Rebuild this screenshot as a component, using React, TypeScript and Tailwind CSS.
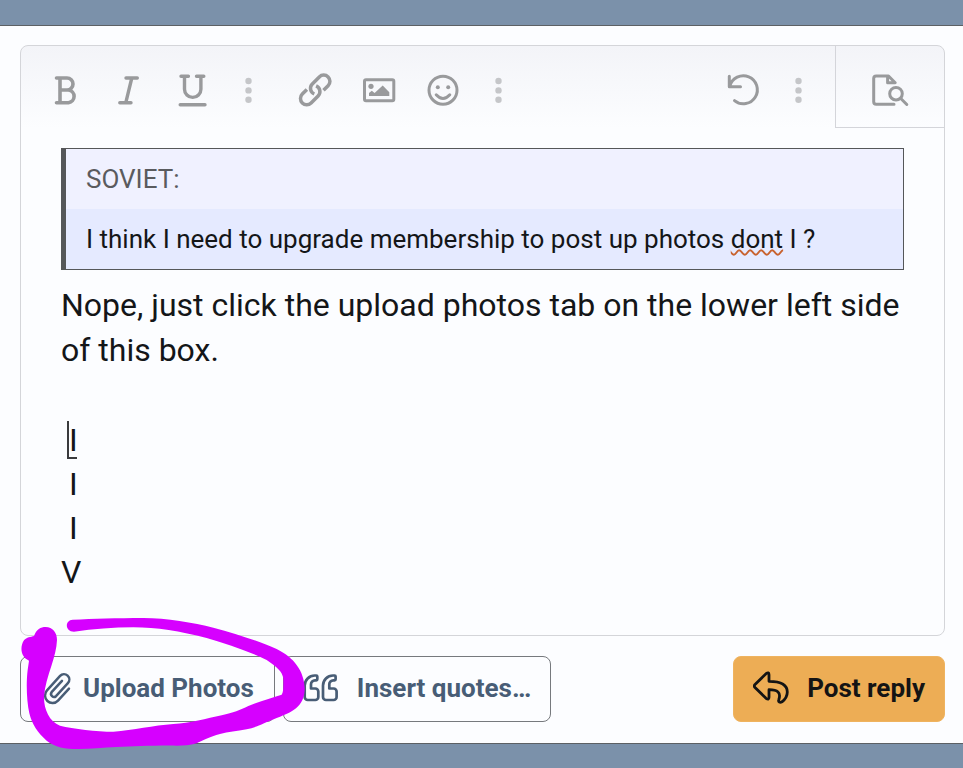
import React from 'react';

interface ToolButtonProps {
  label: string;
  children: React.ReactNode;
}

const ToolButton: React.FC<ToolButtonProps> = ({ label, children }) => (
  <button type="button" aria-label={label} title={label} className="flex h-20 w-16 shrink-0 items-center justify-center text-[#999a9c]">
    <svg
      viewBox="0 0 40 40"
      className="h-10 w-10"
      fill="none"
      stroke="currentColor"
      strokeWidth="3"
      strokeLinecap="round"
      strokeLinejoin="round"
    >
      {children}
    </svg>
  </button>
);

const MoreButton: React.FC<{ label: string }> = ({ label }) => (
  <button type="button" aria-label={label} title={label} className="flex h-20 w-12 shrink-0 items-center justify-center text-[#c5c6c9]">
    <svg viewBox="0 0 8 40" className="h-10 w-2" fill="currentColor">
      <circle cx="3.5" cy="11" r="3.2" />
      <circle cx="3.5" cy="20.4" r="3.2" />
      <circle cx="3.5" cy="29.8" r="3.2" />
    </svg>
  </button>
);

const Toolbar = () => (
  <div className="flex items-start">
    <div className="flex flex-1 items-center pl-3 pt-1">
      <ToolButton label="Bold">
        <path strokeWidth="3.6" d="M11.5 8H22a6 6 0 0 1 0 12h-7M22 20h1.5a6.4 6.4 0 0 1 0 12.700h-12M15 8v24.700" />
      </ToolButton>
      <ToolButton label="Italic">
        <path strokeWidth="3.4" d="M17 8h11.300M10.800 32.700H22M22.800 8l-6 24.700" />
      </ToolButton>
      <ToolButton label="Underline">
        <path strokeWidth="3.4" d="M8 6.200h7.400M23.500 6.200h7.300M11.500 6.200v13a8.200 8.200 0 0 0 16.400 0v-13M7.200 34.700H32" />
      </ToolButton>
      <MoreButton label="More text options" />
      <div className="flex items-center pl-2.5">
        <ToolButton label="Insert link">
          <path strokeLinecap="butt" strokeWidth="3.5" d="M19.3 24A6.2 6.2 0 0 1 17.3 13.9L24.3 6.9A6.2 6.2 0 0 1 33.1 15.7L28.5 20.3" />
          <path strokeLinecap="butt" strokeWidth="3.5" d="M21.1 15.8A6.2 6.2 0 0 1 23.1 25.9L16.1 32.9A6.2 6.2 0 0 1 7.3 24.1L11.9 19.5" />
        </ToolButton>
        <ToolButton label="Insert image">
          <rect x="5.5" y="9.8" width="29.3" height="21" rx="1.5" />
          <circle cx="12" cy="16.3" r="2.6" fill="currentColor" stroke="none" />
          <path stroke="none" fill="currentColor" d="M10 26v-3l2.8-2.3 2.8 2.2 8.1-7.3 6.6 6.6V26z" />
        </ToolButton>
        <ToolButton label="Smilies">
          <circle cx="20" cy="20.2" r="14" />
          <circle cx="14.8" cy="17.3" r="2" fill="currentColor" stroke="none" />
          <circle cx="25.2" cy="17.3" r="2" fill="currentColor" stroke="none" />
          <path d="M13.2 24.8q6.8 7.4 13.6 0" />
        </ToolButton>
        <MoreButton label="More insert options" />
      </div>
      <div className="ml-auto flex items-center pr-3">
        <ToolButton label="Undo">
          <path d="M6.3 6.2v10.6h11.2M6.8 16.2A14 14 0 1 1 11.5 30.6" />
        </ToolButton>
        <MoreButton label="More options" />
      </div>
    </div>
    <div className="flex h-[82px] items-center border-b border-l border-[#d4d5da] px-[22px] pt-1.5">
      <ToolButton label="Preview">
        <path d="M24 34.3H6.2a2.5 2.5 0 0 1-2.5-2.5V8.5A2.5 2.5 0 0 1 6.2 6h12.3l6.7 6.8h-7.6V6.5" />
        <circle cx="26" cy="23.7" r="6.3" />
        <path d="M30.8 28.5l6 6" />
      </ToolButton>
    </div>
  </div>
);

const ReplyBody = () => (
  <div
    contentEditable
    suppressContentEditableWarning
    spellCheck={false}
    role="textbox"
    aria-label="Write your reply"
    className="px-10 pb-[41px] pt-[18px] text-[32px] leading-[45px] text-[#141618] outline-none"
  >
    <blockquote className="border border-l-[5px] border-[#555759] text-[26px] leading-[60px]">
      <div className="bg-[#f0f1ff] px-5 text-[#5a5b5e]">SOVIET:</div>
      <div className="bg-[#e5eaff] px-5">
        I think I need to upgrade membership to post up photos{' '}
        <span className="underline decoration-[#c8622e] decoration-wavy decoration-2 underline-offset-1">dont</span> I ?
      </div>
    </blockquote>
    <p className="mt-[13px]">Nope, just click the upload photos tab on the lower left side of this box.</p>
    <p>
      <br />
    </p>
    <div className="leading-[44px]">
      <p>
        &nbsp;
        <span className="relative">
          I
          <span className="absolute -left-0.5 bottom-0 h-[38px] w-2.5 border-b-2 border-l-2 border-[#3a3b3d]" />
        </span>
      </p>
      <p>&nbsp;I</p>
      <p>&nbsp;I</p>
      <p>V</p>
    </div>
  </div>
);

const PaperclipIcon = () => (
  <svg viewBox="0 0 28 36" className="h-9 w-7" fill="none" stroke="currentColor" strokeWidth="2.5" strokeLinecap="round" strokeLinejoin="round">
    <path d="M26 18.6L15 30.6A7.5 7.5 0 0 1 4 20.4L17.1 5.9A5.3 5.3 0 0 1 24.9 13.1L13 26.2A3 3 0 0 1 8.6 22.2L19 10.8" />
  </svg>
);

const QUOTE_MARK =
  'M11.7 5.5h1.6q1 0 1 1v2.8q0 1-1 1h-1.3a4 4 0 0 0-4 4v4.2h4.3a3 3 0 0 1 3 3v5.500a3 3 0 0 1-3 3H4.7a3 3 0 0 1-3-3V15.5a10 10 0 0 1 10-10z';

const QuotesIcon = () => (
  <svg viewBox="0 0 36 36" className="h-9 w-9" fill="none" stroke="currentColor" strokeWidth="2.7" strokeLinejoin="round">
    <path d={QUOTE_MARK} />
    <path d={QUOTE_MARK} transform="translate(18.3 0)" />
  </svg>
);

const ReplyIcon = () => (
  <svg viewBox="0 0 36 36" className="h-9 w-9" fill="none" stroke="currentColor" strokeWidth="2.8" strokeLinejoin="round">
    <path d="M2 14.500L13 3.700q3-2 3 1v6.600c11 0 18.300 2.500 18.300 10.700 0 4-2.300 7.500-5.300 9.800-2 1.200-4 .2-3.200-2 2.500-7.500-1.300-10-9.800-10.100v7.600q0 3-3 1L2 17.500q-1.400-1.500 0-3z" />
  </svg>
);

// Freehand marker circle drawn around the upload button
const MarkerCircle = () => (
  <svg viewBox="0 0 960 504" className="pointer-events-none absolute -left-5 -top-14 h-[168px] w-80" fill="#d600ff" aria-hidden="true">
    <path d="M218 59C280 57 350 54 430 54C500 54 580 68 640 83C710 102 780 124 830 147C882 172 913 214 914 265C914 312 888 334 830 354C790 370 770 382 740 388C710 393 685 396 660 402C630 410 605 423 590 430C570 437 550 437 530 437C460 436 400 440 350 441C310 443 270 447 235 447C195 447 165 442 140 422C112 398 96 372 88 340C80 305 78 250 83 210L87 182C60 170 60 138 72 121C80 111 92 111 102 108C109 88 122 81 137 81C158 81 171 98 171 120C170 145 163 170 155 195C144 228 134 260 132 290C131 325 147 365 180 377C220 387 290 395 340 395C400 391 460 376 520 372C570 370 620 355 665 346C700 338 720 330 745 318C780 303 815 294 845 284C851 275 850 260 850 235C847 215 830 200 800 180C740 150 680 133 620 114C540 94 470 82 400 82C340 82 280 87 222 95C194 95 194 60 218 59Z" />
  </svg>
);

interface ActionButtonProps {
  icon: React.ReactNode;
  className: string;
  children: React.ReactNode;
}

const ActionButton: React.FC<ActionButtonProps> = ({ icon, className, children }) => (
  <button type="button" className={`flex h-[66px] items-center whitespace-nowrap rounded-lg border pb-0.5 text-[26px] font-bold leading-8 ${className}`}>
    {icon}
    <span>{children}</span>
  </button>
);

export default function App() {
  return (
    <div className="min-h-screen bg-[#7b91aa] py-[25px] font-[Roboto,sans-serif]">
      <main className="border-y border-[#5c6064] bg-[#fcfdff] pb-[21px] pl-5 pr-[18px] pt-[19px]">
        <section className="rounded-lg border border-[#d4d5d9] bg-linear-to-b from-[#f3f4f8] to-[#fcfdff] to-[82px]">
          <Toolbar />
          <ReplyBody />
        </section>
        <div className="relative mt-5 flex items-center">
          <ActionButton icon={<PaperclipIcon />} className="gap-3 border-[#76797d] pl-[22px] pr-5 text-[#485d76]">
            Upload Photos
          </ActionButton>
          <ActionButton icon={<QuotesIcon />} className="ml-2 gap-[18px] border-[#76797d] px-[19px] text-[#485d76]">
            Insert quotes…
          </ActionButton>
          <ActionButton icon={<ReplyIcon />} className="ml-auto gap-[18px] border-[#efb35f] bg-[#edad55] px-[19px] text-[#141414]">
            Post reply
          </ActionButton>
          <MarkerCircle />
        </div>
      </main>
    </div>
  );
}
